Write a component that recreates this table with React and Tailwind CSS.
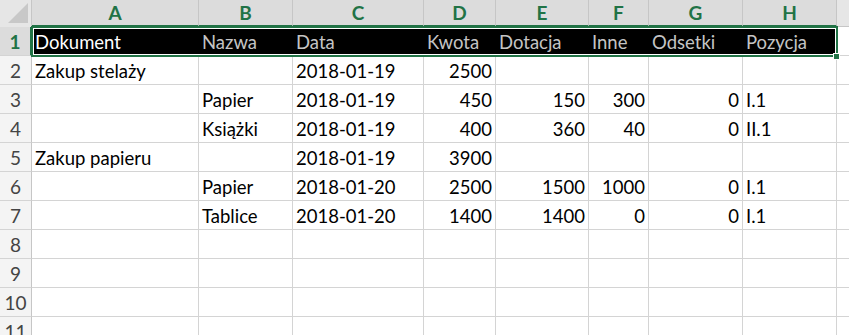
const cols = [
  { key: "A", w: "w-[167px]" },
  { key: "B", w: "w-[94px]" },
  { key: "C", w: "w-[131px]" },
  { key: "D", w: "w-[72px]" },
  { key: "E", w: "w-[93px]" },
  { key: "F", w: "w-[60px]" },
  { key: "G", w: "w-[94px]" },
  { key: "H", w: "w-[94px]" },
  { key: "", w: "w-[100px]" },
];

// cell values per row, [text, align]
const rows = [
  [["Dokument"], ["Nazwa"], ["Data"], ["Kwota"], ["Dotacja"], ["Inne"], ["Odsetki"], ["Pozycja"], [""]],
  [["Zakup stelaży"], [""], ["2018-01-19"], ["2500", "r"], [""], [""], [""], [""], [""]],
  [[""], ["Papier"], ["2018-01-19"], ["450", "r"], ["150", "r"], ["300", "r"], ["0", "r"], ["I.1"], [""]],
  [[""], ["Książki"], ["2018-01-19"], ["400", "r"], ["360", "r"], ["40", "r"], ["0", "r"], ["II.1"], [""]],
  [["Zakup papieru"], [""], ["2018-01-19"], ["3900", "r"], [""], [""], [""], [""], [""]],
  [[""], ["Papier"], ["2018-01-20"], ["2500", "r"], ["1500", "r"], ["1000", "r"], ["0", "r"], ["I.1"], [""]],
  [[""], ["Tablice"], ["2018-01-20"], ["1400", "r"], ["1400", "r"], ["0", "r"], ["0", "r"], ["I.1"], [""]],
  [[""], [""], [""], [""], [""], [""], [""], [""], [""]],
  [[""], [""], [""], [""], [""], [""], [""], [""], [""]],
  [[""], [""], [""], [""], [""], [""], [""], [""], [""]],
  [[""], [""], [""], [""], [""], [""], [""], [""], [""]],
];

function App() {
  return (
    <div className="relative w-[849px] h-[335px] overflow-hidden bg-white font-['Lato','Open_Sans',sans-serif] text-[18.5px] text-black">
      {/* column headers */}
      <div className="flex h-[27px]">
        <div className="relative w-[32px] shrink-0 bg-[#e6e6e6] border-r border-[#c6c6c6]">
          <div className="absolute right-[3px] bottom-[4px] w-0 h-0 border-l-[20px] border-l-transparent border-b-[20px] border-b-[#c8c8c8]" />
        </div>
        {cols.map((c, i) => (
          <div
            key={i}
            className={`${c.w} shrink-0 flex items-center justify-center pt-[2px] border-r border-[#c6c6c6] text-[19px] font-bold ${
              c.key
                ? "bg-[#dcdcdc] text-[#217346] border-b-2 border-b-[#217346]"
                : "bg-[#e6e6e6] border-b border-b-[#c6c6c6]"
            }`}
          >
            {c.key}
          </div>
        ))}
      </div>

      {rows.map((row, r) => (
        <div key={r} className="flex h-[29px]">
          <div
            className={`w-[32px] shrink-0 flex items-center justify-center pt-[2px] text-[19px] border-b border-[#d4d4d4] ${
              r === 0
                ? "bg-[#dcdcdc] text-[#217346] font-bold border-r-2 border-r-[#217346]"
                : "bg-[#f4f4f4] text-[#444] border-r border-r-[#c6c6c6]"
            }`}
          >
            {r + 1}
          </div>
          {row.map(([text, align], i) => {
            const header = r === 0 && i < 8;
            return (
              <div
                key={i}
                className={`${cols[i].w} shrink-0 flex items-center pt-[3px] px-[3px] whitespace-nowrap ${
                  align === "r" ? "justify-end" : "justify-start"
                } ${
                  header
                    ? `bg-black ${i === 0 ? "text-white" : "text-[#c4c4c4]"}`
                    : "border-r border-b border-[#d4d4d4]"
                }`}
              >
                {text}
              </div>
            );
          })}
        </div>
      ))}

      {/* selection border around A1:H1 */}
      <div className="absolute left-[31px] top-[26px] w-[807px] h-[31px] border-2 border-[#217346] pointer-events-none">
        <div className="w-full h-full border border-white" />
      </div>
      <div className="absolute left-[833px] top-[53px] w-[7px] h-[7px] bg-[#217346] border border-white" />
    </div>
  );
}

export default App;
